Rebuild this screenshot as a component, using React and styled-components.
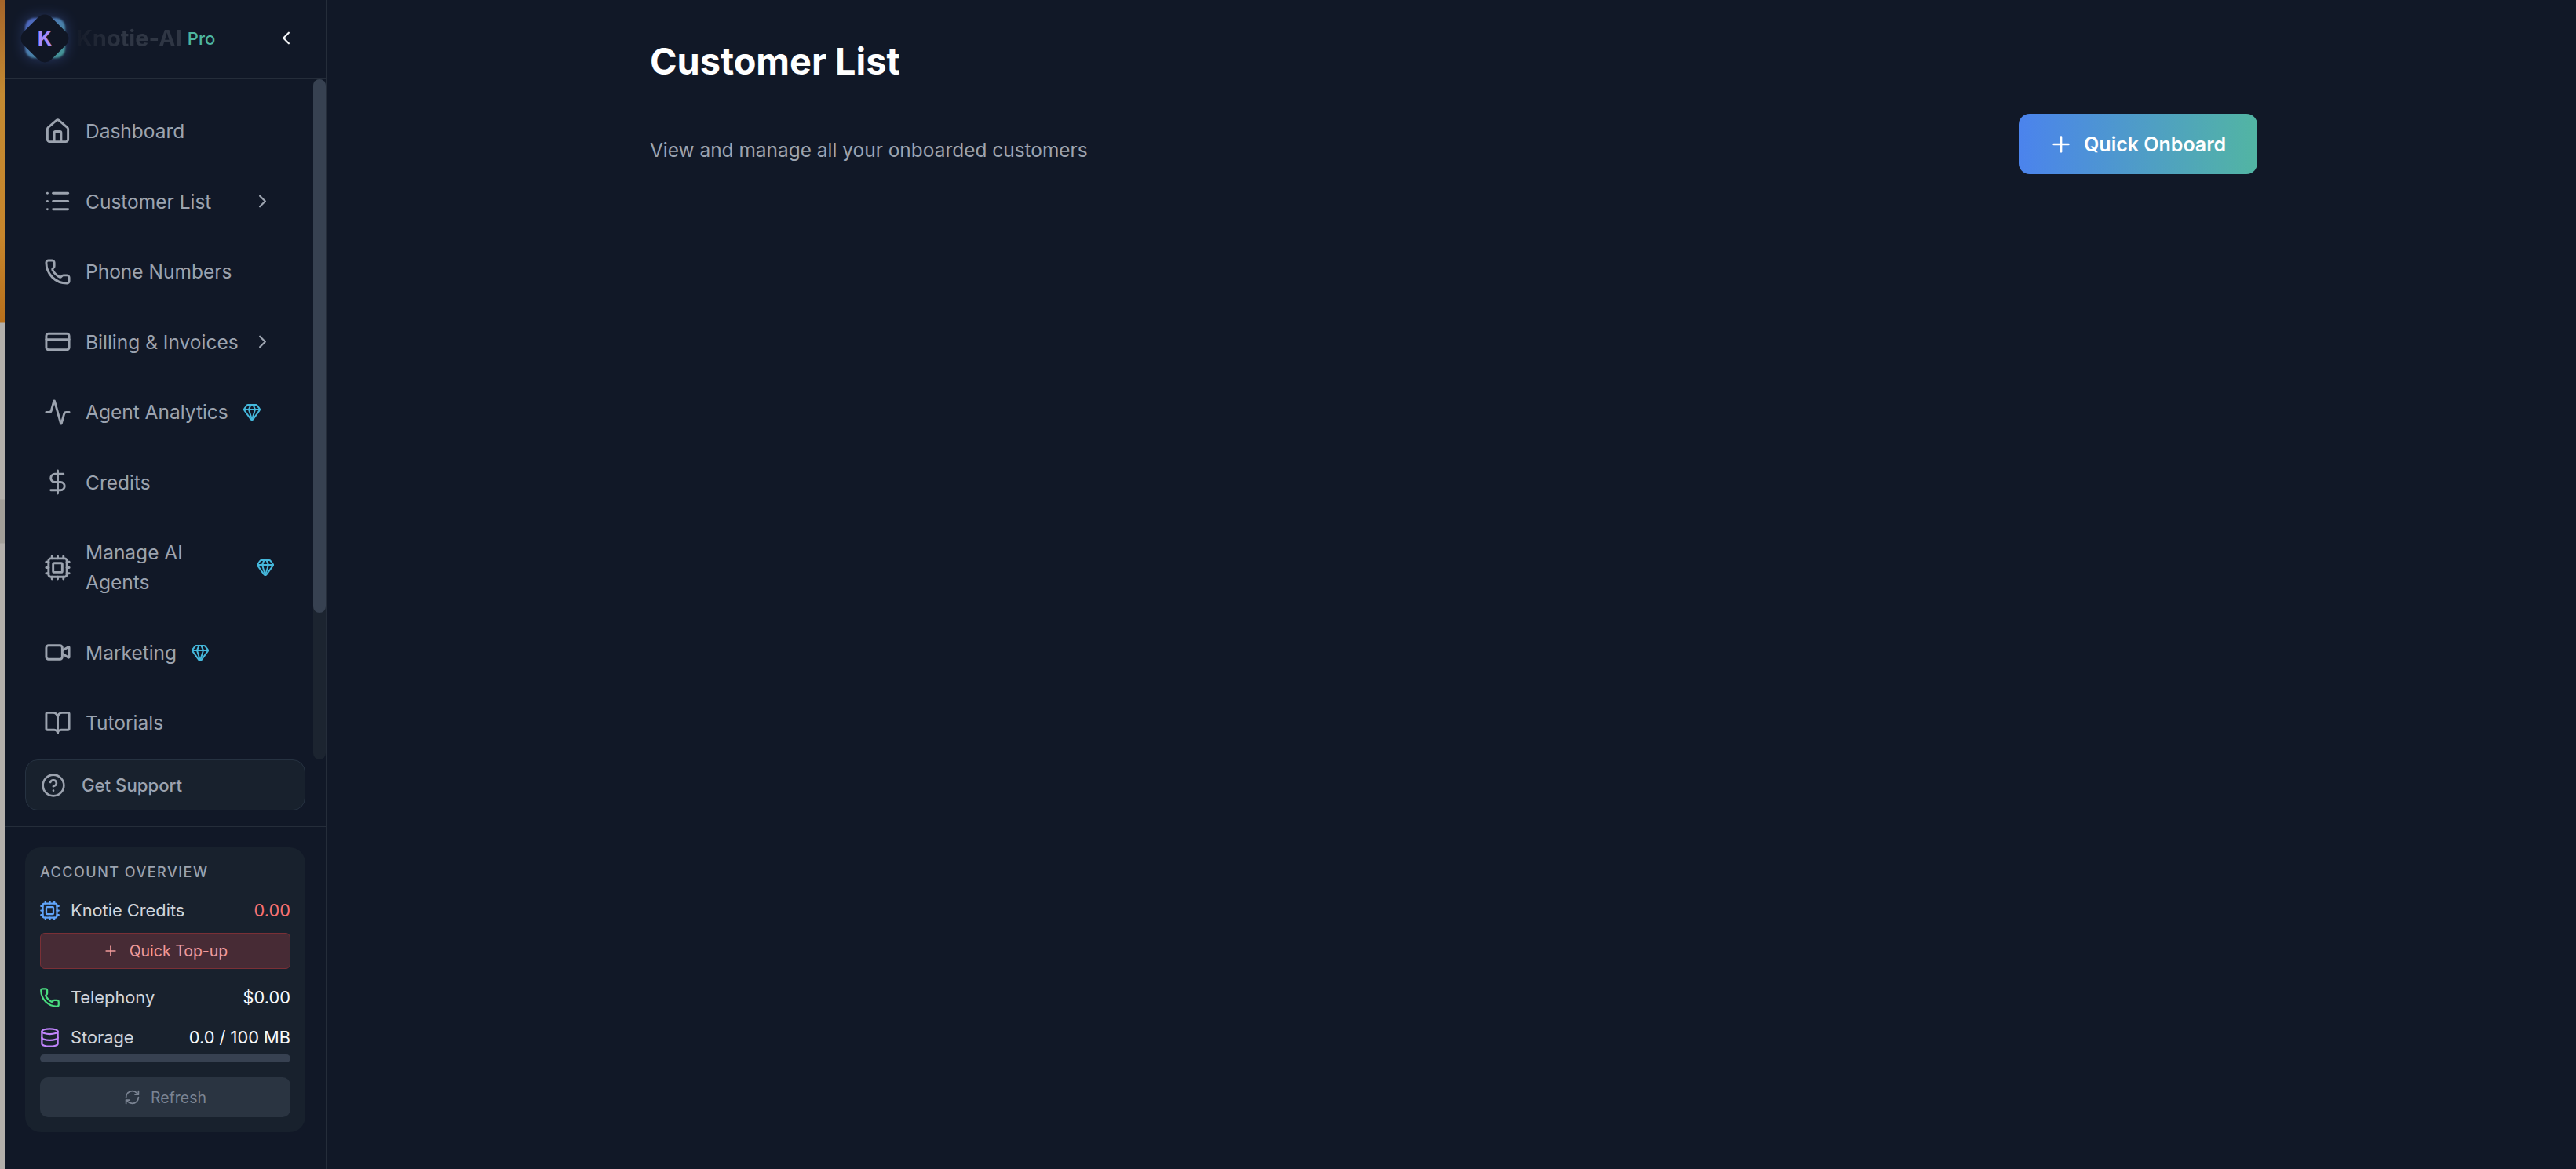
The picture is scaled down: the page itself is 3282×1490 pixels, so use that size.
import React from 'react'
import styled, { createGlobalStyle } from 'styled-components'
import {
  Activity,
  BookOpen,
  ChevronLeft,
  ChevronRight,
  CircleHelp,
  Cpu,
  CreditCard,
  Database,
  DollarSign,
  Gem,
  House,
  List,
  Phone,
  Plus,
  RefreshCw,
  Video,
} from 'lucide-react'

const GlobalStyles = createGlobalStyle`
  * { box-sizing:border-box; }
  html, body { margin:0; padding:0; background:#111827; }
  body { font-family:'Inter', 'Liberation Sans', sans-serif; }
`

const Page = styled.div`
  display:flex;
  width:100vw;
  height:100vh;
  overflow:hidden;
  background:#111827;
`

// sliver of the window behind the app
const BehindWindow = styled.div`
  flex:0 0 6px;
  background:linear-gradient(180deg,
    #a5652a 0, #c48a32 120px, #c8862c 300px, #b8701c 411px,
    #b4b0ac 412px, #b4b0ac 636px, #a39f99 637px, #a39f99 692px,
    #b4b0ac 693px, #b4b0ac 100%);
`

const Sidebar = styled.aside`
  flex:0 0 410px;
  display:flex;
  flex-direction:column;
  height:100%;
  border-right:1px solid #252d3a;
  background:#111827;
`

const Header = styled.header`
  flex:0 0 101px;
  display:flex;
  align-items:center;
  padding:0 37px 3px 20px;
  border-bottom:1px solid #252d3a;
`

const Logo = styled.div`
  display:grid;
  place-items:center;
  width:62px;
  height:62px;
  flex:none;
  > * { grid-area:1 / 1; }
`

const LogoGlow = styled.div`
  width:51px;
  height:51px;
  border-radius:12px;
  background:linear-gradient(135deg, #5b72e0, #4db0a6);
  box-shadow:0 0 18px rgba(96, 130, 235, 0.45);
  filter:blur(1px);
  opacity:0.85;
`

const LogoDiamond = styled.div`
  width:50px;
  height:50px;
  border-radius:12px;
  background:#101624;
  transform:rotate(45deg);
`

const LogoLetter = styled.span`
  font-size:26px;
  font-weight:700;
  color:#a78bfa;
  z-index:1;
`

const Brand = styled.span`
  margin-left:9px;
  font-size:29px;
  font-weight:700;
  line-height:38px;
  background:linear-gradient(90deg, #151b29, #2f3644 45%);
  -webkit-background-clip:text;
  background-clip:text;
  color:transparent;
`

const Pro = styled.span`
  margin-left:7px;
  font-size:22px;
  font-weight:500;
  color:#4db6a0;
`

const Collapse = styled(ChevronLeft)`
  margin-left:auto;
  color:#f3f4f6;
`

const NavArea = styled.div`
  flex:1;
  min-height:0;
  display:flex;
`

const Nav = styled.nav`
  flex:1;
  min-width:0;
  display:flex;
  flex-direction:column;
  gap:13.5px;
  padding:28px 49px 0 48px;
  overflow:hidden;
`

const ScrollTrack = styled.div`
  flex:0 0 16px;
  border-radius:8px;
  background:#1c2430;
`

const ScrollThumb = styled.div`
  height:680px;
  border-radius:8px;
  background:#374151;
`

const NavItem = styled.a`
  flex:none;
  display:flex;
  align-items:center;
  padding:19px 0;
  color:#9ca3af;
  font-size:24.5px;
  line-height:38px;
`

const NavIcon = styled.span`
  flex:none;
  display:flex;
  justify-content:center;
  width:38px;
  margin-right:17px;
`

const Label = styled.span`
  flex:0 1 auto;
`

const Arrow = styled(ChevronRight)`
  flex:none;
  margin-left:auto;
  margin-right:2px;
`

const Premium = styled(Gem)`
  flex:none;
  margin-left:18px;
  color:#45b8dc;
`

const SupportArea = styled.div`
  padding:0 26px 20px;
  border-bottom:1px solid #252d3a;
`

const SupportButton = styled.a`
  display:flex;
  align-items:center;
  gap:20px;
  height:65px;
  padding:0 19px;
  border:1px solid #263241;
  border-radius:16px;
  background:#18212d;
  color:#9ca3af;
  font-size:22.2px;
  font-weight:500;
`

const AccountArea = styled.div`
  padding:26px 26px 26px;
  border-bottom:1px solid #252d3a;
`

const SidebarFoot = styled.div`
  flex:0 0 20px;
`

const AccountCard = styled.section`
  display:flex;
  flex-direction:column;
  padding:18px 19px 19px;
  border-radius:20px;
  background:#18212d;
`

const CardTitle = styled.h3`
  margin:0;
  font-size:18px;
  font-weight:500;
  line-height:28px;
  letter-spacing:1.5px;
  text-transform:uppercase;
  color:#9ca3af;
`

const StatRow = styled.div`
  display:flex;
  align-items:center;
  height:30px;
  margin-top:${p => p.$top}px;
  font-size:21.8px;
  color:#d1d5db;
`

const StatIcon = styled.span`
  display:flex;
  margin-left:-1px;
  margin-right:13px;
  color:${p => p.$color};
`

const StatValue = styled.span`
  margin-left:auto;
  font-weight:400;
  color:${p => p.$color || '#f9fafb'};
`

const TopUp = styled.button`
  display:flex;
  align-items:center;
  justify-content:center;
  gap:14px;
  height:46px;
  margin-top:14px;
  border:1px solid #7a3036;
  border-radius:6px;
  background:#472b35;
  color:#f19a9a;
  font:400 19.5px 'Inter', sans-serif;
`

const Meter = styled.div`
  height:10px;
  margin-top:7px;
  border-radius:5px;
  background:#374151;
  overflow:hidden;
`

const Refresh = styled.button`
  display:flex;
  align-items:center;
  justify-content:center;
  gap:13px;
  height:51px;
  margin-top:19px;
  border:0;
  border-radius:10px;
  background:#2a3441;
  color:#7b8493;
  font:400 19.5px 'Inter', sans-serif;
`

const Main = styled.main`
  flex:1;
  padding:50px 0 0 412px;
`

const Content = styled.div`
  width:2048px;
  display:flex;
  justify-content:space-between;
  align-items:flex-end;
`

const Title = styled.h1`
  margin:0 0 66px;
  font-size:46.8px;
  font-weight:700;
  line-height:56px;
  color:#fff;
`

const Subtitle = styled.p`
  margin:0 0 12px;
  font-size:24.45px;
  line-height:38px;
  color:#9ca3af;
`

const OnboardButton = styled.button`
  display:flex;
  align-items:center;
  gap:13px;
  width:304px;
  height:77px;
  padding:0 0 0 38px;
  border:0;
  border-radius:14px;
  background:linear-gradient(90deg, #4b83ed, #52b5a3);
  color:#fff;
  font:600 25px 'Inter', sans-serif;
`

const navItems = [
  { label: 'Dashboard', icon: House },
  { label: 'Customer List', icon: List, arrow: true },
  { label: 'Phone Numbers', icon: Phone },
  { label: 'Billing & Invoices', icon: CreditCard, arrow: true },
  { label: 'Agent Analytics', icon: Activity, gem: true },
  { label: 'Credits', icon: DollarSign },
  { label: 'Manage AI Agents', icon: Cpu, gem: true },
  { label: 'Marketing', icon: Video, gem: true },
  { label: 'Tutorials', icon: BookOpen },
]

export default function App() {
  return (
    <Page>
      <GlobalStyles />
      <BehindWindow />
      <Sidebar>
        <Header>
          <Logo>
            <LogoGlow />
            <LogoDiamond />
            <LogoLetter>K</LogoLetter>
          </Logo>
          <Brand>Knotie-AI</Brand>
          <Pro>Pro</Pro>
          <Collapse size={27} />
        </Header>

        <NavArea>
          <Nav>
            {navItems.map(({ label, icon: Icon, arrow, gem }) => (
              <NavItem key={label}>
                <NavIcon><Icon size={35} /></NavIcon>
                <Label>{label}</Label>
                {arrow && <Arrow size={27} />}
                {gem && <Premium size={24} />}
              </NavItem>
            ))}
          </Nav>
          <ScrollTrack><ScrollThumb /></ScrollTrack>
        </NavArea>

        <SupportArea>
          <SupportButton>
            <CircleHelp size={32} />
            Get Support
          </SupportButton>
        </SupportArea>

        <AccountArea>
          <AccountCard>
            <CardTitle>Account Overview</CardTitle>
            <StatRow $top={19}>
              <StatIcon $color="#60a5fa"><Cpu size={27} /></StatIcon>
              Knotie Credits
              <StatValue $color="#f87171">0.00</StatValue>
            </StatRow>
            <TopUp><Plus size={20} />Quick Top-up</TopUp>
            <StatRow $top={21}>
              <StatIcon $color="#4ade80"><Phone size={27} /></StatIcon>
              Telephony
              <StatValue>$0.00</StatValue>
            </StatRow>
            <StatRow $top={21}>
              <StatIcon $color="#c084fc"><Database size={27} /></StatIcon>
              Storage
              <StatValue>0.0 / 100 MB</StatValue>
            </StatRow>
            <Meter />
            <Refresh><RefreshCw size={21} />Refresh</Refresh>
          </AccountCard>
        </AccountArea>
        <SidebarFoot />
      </Sidebar>

      <Main>
        <Content>
          <div>
            <Title>Customer List</Title>
            <Subtitle>View and manage all your onboarded customers</Subtitle>
          </div>
          <OnboardButton><Plus size={32} />Quick Onboard</OnboardButton>
        </Content>
      </Main>
    </Page>
  )
}
